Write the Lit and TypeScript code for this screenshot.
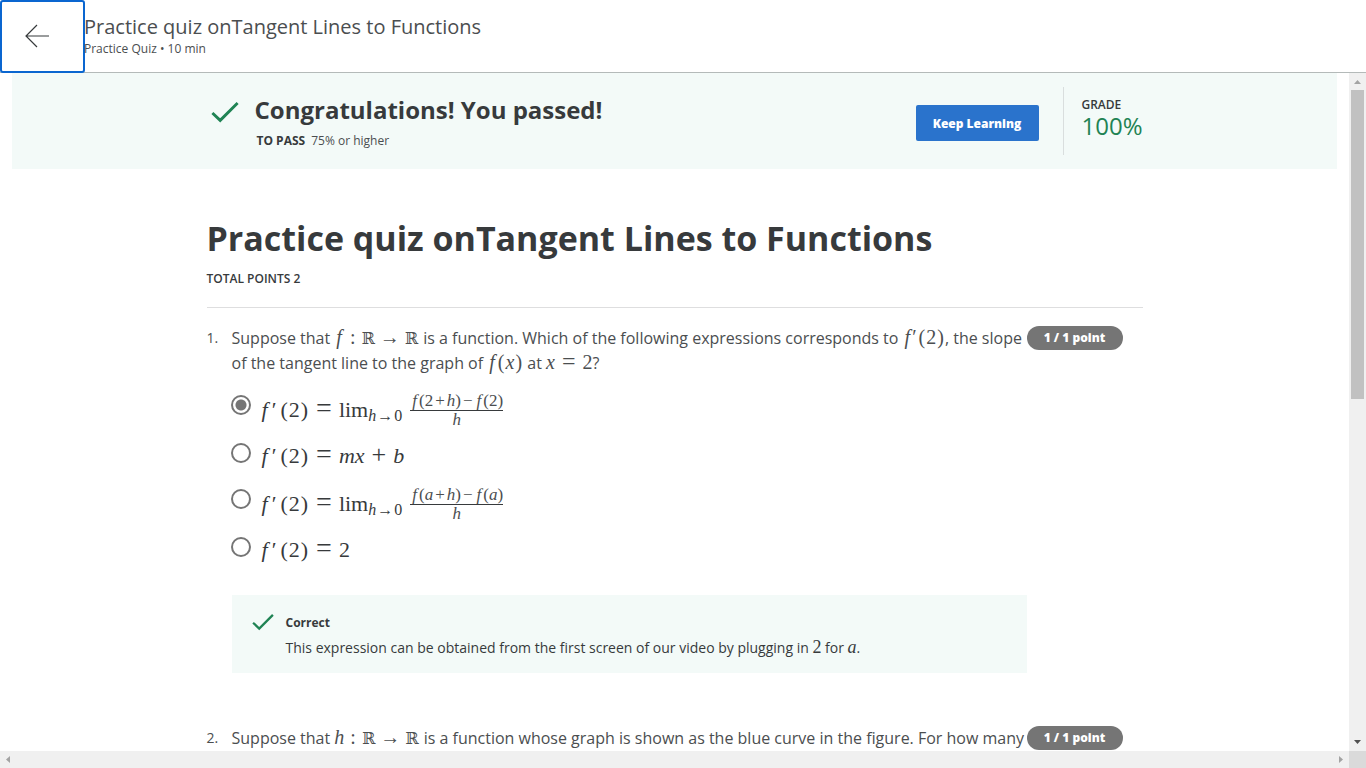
import { LitElement, html, css, svg } from "lit";
import { customElement, property } from "lit/decorators.js";

const check = (size: number) => html`
  <svg class="check" width=${size} height=${size} viewBox="0 0 28 28" aria-hidden="true">
    <path d="M1.4 15 9.2 22.4 26.6 5" fill="none" stroke="#1f8354" stroke-width="2.9" />
  </svg>`;

const eq = html`<span class="rel">=</span>`;
const args = (inner: unknown) => html`<span class="paren">(</span>${inner}<span class="paren">)</span>`;
const fPrime = html`<i class="f">f</i><span class="prime">′</span>${args("2")}`;
const reals = html`<span class="colon">:</span><span class="bb">ℝ</span><span class="arrow">→</span><span class="bb">ℝ</span>`;

const limit = html`lim<sub><i>h</i><span class="to">→</span>0</sub>`;
const quotient = (a: unknown) => html`<span class="frac"
    ><span class="num"><i class="f">f</i>(${a}<span class="op">+</span><i>h</i>)<span class="op">−</span><i class="f">f</i>(${a})</span
    ><span class="den"><i>h</i></span></span>`;

const mathStyles = css`
  .math {
    font-family: "Liberation Serif", serif;
    font-size: 20px;
    line-height: 1;
    white-space: nowrap;
  }
  .math .f {
    margin-left: 2px;
    margin-right: 2px;
  }
  .math .rel {
    margin: 0 7px;
    font-size: 24px;
    line-height: 0;
  }
  .math .colon {
    margin: 0 6px;
  }
  .math .paren {
    margin: 0 1px;
  }
  .math .bb {
    font-family: "DejaVu Serif", "DejaVu Sans", serif;
    font-size: 16px;
  }
  .math .bb:last-child {
    margin-right: 1px;
  }
  .math .arrow {
    margin: 0 5px;
  }
  .math .prime {
    margin-right: 1px;
  }
`;

@customElement("scroll-arrow")
export class ScrollArrow extends LitElement {
  @property() dir = "up";
  @property({ type: Boolean }) dark = false;

  static styles = css`
    :host {
      display: block;
      width: 17px;
      height: 17px;
      flex: none;
    }
    svg {
      display: block;
    }
  `;

  render() {
    const shapes: Record<string, string> = {
      up: "M5 11h7L8.500 7z",
      down: "M5 6h7L8.500 10z",
      left: "M10 5v7L6 8.500z",
      right: "M7 5v7l4-3.500z",
    };
    return html`<svg width="17" height="17" viewBox="0 0 17 17" aria-hidden="true">
      ${svg`<path d=${shapes[this.dir]} fill=${this.dark ? "#505050" : "#a3a3a3"} />`}
    </svg>`;
  }
}

@customElement("quiz-question")
export class QuizQuestion extends LitElement {
  @property({ type: Number }) number = 1;

  static styles = css`
    :host {
      display: grid;
      grid-template-columns: 25px minmax(0, 1fr) 116px;
      align-items: start;
    }
    .index {
      color: #4b4e50;
      font-size: 14px;
      line-height: 24px;
    }
    .prompt {
      color: #4b4e50;
      font-size: 16px;
      line-height: 25px;
    }
    .points {
      width: 96px;
      box-sizing: border-box;
      border-radius: 12px;
      background: #757575;
      color: #fff;
      font-size: 12px;
      font-weight: 800;
      line-height: 24px;
      text-align: center;
    }
    .body {
      grid-column: 2;
    }
  `;

  render() {
    return html`
      <div class="index">${this.number}.</div>
      <div class="prompt"><slot name="prompt"></slot></div>
      <div class="points">1 / 1 point</div>
      <div class="body"><slot></slot></div>
    `;
  }
}

@customElement("app-root")
export class AppRoot extends LitElement {
  static styles = [
    mathStyles,
    css`
      :host {
        display: flex;
        flex-direction: column;
        height: 100vh;
        overflow: hidden;
        background: #fff;
        color: #373a3c;
        font-family: "Open Sans", sans-serif;
        font-size: 14px;
      }
      h1,
      h2,
      p,
      fieldset {
        margin: 0;
        padding: 0;
        border: 0;
        min-width: 0;
      }
      header {
        display: flex;
        flex: none;
        height: 72px;
        border-bottom: 1px solid #b4bab9;
      }
      .back {
        display: flex;
        align-items: center;
        width: 85px;
        height: 73px;
        flex: none;
        padding: 0 0 2px 22px;
        border: 2px solid #0a66d0;
        border-radius: 3px;
        background: #fff;
        margin-right: -1px;
      }
      .course {
        padding-top: 14px;
        color: #4b4e50;
      }
      .course-title {
        font-size: 20px;
        line-height: 26px;
      }
      .course-meta {
        font-size: 12px;
        line-height: 18px;
      }
      .viewport {
        display: flex;
        flex: 1;
        min-height: 0;
      }
      main {
        flex: 1;
        min-width: 0;
        overflow: hidden;
      }
      .column {
        max-width: 936px;
        margin: 0 auto;
      }
      .banner {
        margin: 0 12px;
        background: #f3faf8;
      }
      .banner .column {
        display: flex;
        align-items: flex-start;
        height: 96px;
      }
      .banner .check {
        margin: 25px 16px 0 4px;
      }
      .result {
        flex: 1;
      }
      .result h2 {
        margin-top: 19px;
        font-size: 24px;
        line-height: 36px;
        font-weight: 700;
      }
      .result p {
        margin: 4px 0 0 2px;
        color: #4b4e50;
        font-size: 12px;
        line-height: 18px;
      }
      .result strong {
        margin-right: 6px;
        color: #373a3c;
      }
      strong {
        font-weight: 700;
      }
      .keep {
        width: 123px;
        height: 36px;
        margin: 32px 24px 0 0;
        padding: 0;
        border: 0;
        border-radius: 2px;
        background: #2a73cc;
        color: #fff;
        font: 800 12px "Open Sans", sans-serif;
      }
      .grade {
        box-sizing: border-box;
        width: 80px;
        height: 68px;
        margin-top: 14px;
        padding: 9px 0 0 18px;
        border-left: 1px solid #d9dede;
        font-size: 12px;
        line-height: 18px;
        font-weight: 600;
      }
      .score {
        color: #1f8354;
        font-size: 24px;
        line-height: 24px;
        font-weight: 400;
      }
      .title {
        padding-top: 45px;
        font-size: 34px;
        line-height: 48px;
        font-weight: 700;
      }
      .total {
        padding: 8px 0 19px;
        border-bottom: 1px solid #dededf;
        font-size: 12px;
        line-height: 18px;
        font-weight: 600;
      }
      .total + quiz-question {
        margin-top: 18px;
      }
      quiz-question + quiz-question {
        margin-top: 53px;
      }
      .options {
        padding-top: 16px;
      }
      .option {
        display: flex;
        align-items: flex-start;
        height: 46px;
      }
      .option.tall {
        height: 48px;
      }
      .option input {
        appearance: none;
        box-sizing: border-box;
        flex: none;
        width: 20px;
        height: 20px;
        margin: 3px 9px 0 -1px;
        border: 2px solid #757575;
        border-radius: 50%;
      }
      .option input:checked {
        background: radial-gradient(circle, #757575 5px, transparent 6px);
      }
      .option .math {
        display: flex;
        align-items: center;
        min-height: 32px;
        font-size: 22px;
        line-height: 24px;
      }
      .option .prime {
        margin-left: 2px;
        margin-right: 3px;
      }
      .option .rel {
        margin: 0 7px;
        font-size: 28px;
      }
      .option .plus {
        margin: 0 7px;
        font-size: 26px;
        line-height: 0;
      }
      sub {
        font-size: 16px;
        line-height: 1;
        vertical-align: -4px;
      }
      .to {
        margin: 0 1px;
      }
      .frac {
        display: flex;
        flex-direction: column;
        align-items: center;
        margin-left: 8px;
        color: #4b4e50;
        font-size: 17px;
        line-height: 18px;
      }
      .frac .op {
        margin: 0 2px;
      }
      .frac .num {
        border-bottom: 1px solid #373a3c;
      }
      .feedback {
        display: flex;
        gap: 12px;
        margin-top: 15px;
        padding: 16px 20px 12px;
        background: #f3faf8;
      }
      .feedback strong {
        font-size: 12px;
        line-height: 24px;
      }
      .feedback p {
        line-height: 26px;
      }
      .feedback .math {
        font-size: 18px;
      }
      .vbar {
        display: flex;
        flex-direction: column;
        width: 17px;
        flex: none;
        background: #f0f0f0;
      }
      .track {
        flex: 1;
        padding: 0 2px;
      }
      .thumb {
        height: 48%;
        background: #c1c1c1;
      }
      .hbar {
        display: flex;
        flex: none;
        background: #f0f0f0;
      }
      .corner {
        width: 17px;
        background: #dadada;
      }
      .spacer {
        flex: 1;
      }
    `,
  ];

  private option(left: unknown, right: unknown = "", checked = false) {
    return html`<label class="option ${right ? "tall" : ""}">
      <input type="radio" name="q1" ?checked=${checked} />
      <span class="math"><span>${fPrime}${eq}${left}</span>${right}</span>
    </label>`;
  }

  render() {
    return html`
      <header>
        <button class="back" aria-label="Back">
          <svg width="26" height="26" viewBox="0 0 26 26" fill="none" stroke="#373a3c" stroke-width="1.200">
            <path d="M13 2 2 13l11 11M2 13h23" />
          </svg>
        </button>
        <div class="course">
          <div class="course-title">Practice quiz onTangent Lines to Functions</div>
          <div class="course-meta">Practice Quiz • 10 min</div>
        </div>
      </header>
      <div class="viewport">
        <main>
          <section class="banner">
            <div class="column">
              ${check(28)}
              <div class="result">
                <h2>Congratulations! You passed!</h2>
                <p><strong>TO PASS</strong>75% or higher</p>
              </div>
              <button class="keep">Keep Learning</button>
              <div class="grade">GRADE<div class="score">100%</div></div>
            </div>
          </section>
          <div class="column">
            <h1 class="title">Practice quiz onTangent Lines to Functions</h1>
            <div class="total">TOTAL POINTS 2</div>
            <quiz-question number="1">
              <div slot="prompt">
                Suppose that <span class="math"><i class="f">f</i>${reals}</span> is a function. Which of the following
                expressions corresponds to <span class="math">${fPrime}</span>, the slope of the tangent line to the
                graph of <span class="math"><i class="f">f</i>${args(html`<i>x</i>`)}</span> at
                <span class="math"><i>x</i>${eq}2</span>?
              </div>
              <fieldset class="options" aria-label="Question 1 answers">
                ${this.option(limit, quotient("2"), true)}
                ${this.option(html`<i>mx</i><span class="plus">+</span><i>b</i>`)}
                ${this.option(limit, quotient(html`<i>a</i>`))}
                ${this.option("2")}
              </fieldset>
              <div class="feedback">
                ${check(22)}
                <div>
                  <strong>Correct</strong>
                  <p>
                    This expression can be obtained from the first screen of our video by plugging in
                    <span class="math">2</span> for <span class="math"><i>a</i></span>.
                  </p>
                </div>
              </div>
            </quiz-question>
            <quiz-question number="2">
              <div slot="prompt">
                Suppose that <span class="math"><i>h</i>${reals}</span> is a function whose graph is shown as the blue
                curve in the figure. For how many
              </div>
            </quiz-question>
          </div>
        </main>
        <div class="vbar" aria-hidden="true">
          <scroll-arrow dir="up"></scroll-arrow>
          <div class="track"><div class="thumb"></div></div>
          <scroll-arrow dir="down" dark></scroll-arrow>
        </div>
      </div>
      <div class="hbar" aria-hidden="true">
        <scroll-arrow dir="left"></scroll-arrow>
        <div class="spacer"></div>
        <scroll-arrow dir="right"></scroll-arrow>
        <div class="corner"></div>
      </div>
    `;
  }
}
